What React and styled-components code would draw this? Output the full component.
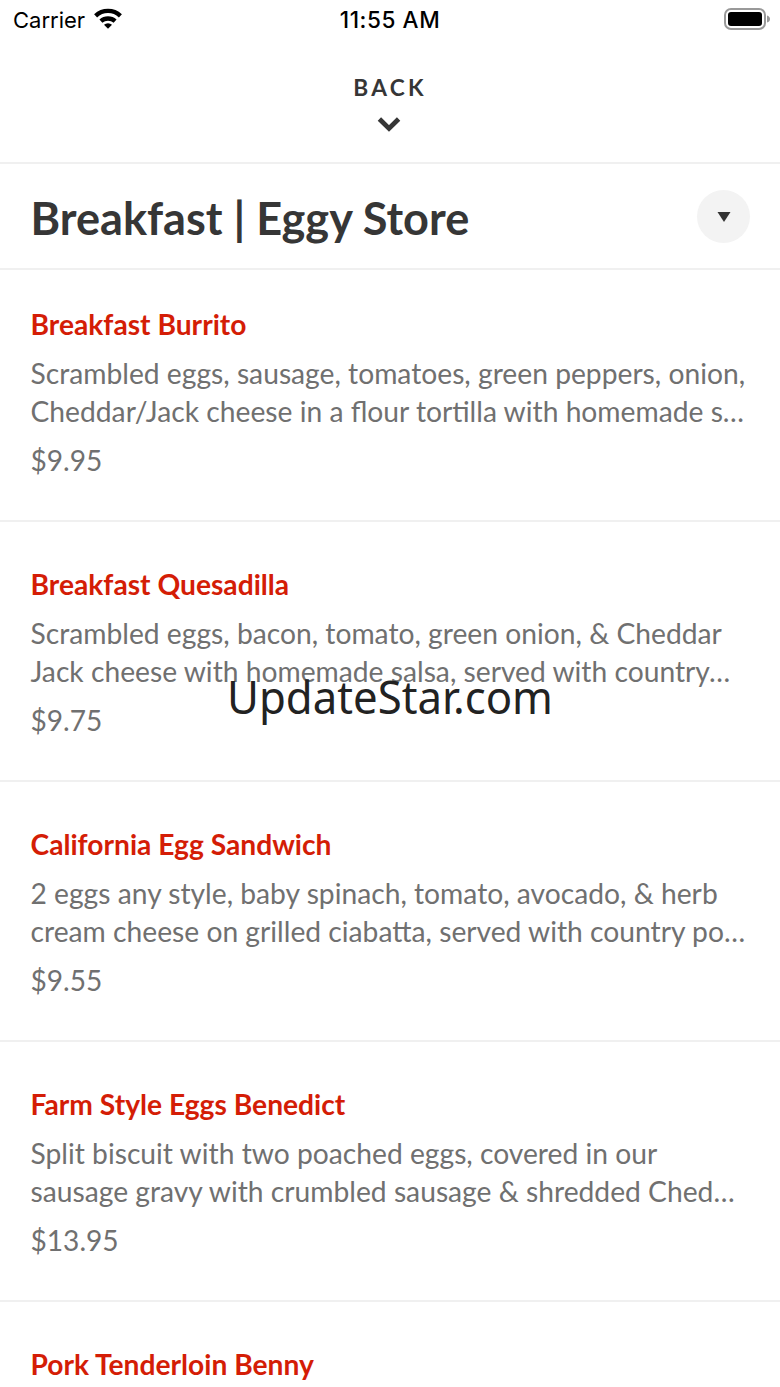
import React from 'react'
import styled, { createGlobalStyle } from 'styled-components'

const GlobalStyle = createGlobalStyle`
*{
    box-sizing:border-box;
}
body{
    margin:0;
    background-color:#fff;
    font-family:Lato, sans-serif;
}
`

const Screen = styled.div`
position:relative;
width:780px;
height:1387px;
overflow:hidden;
background-color:#fff;
`

const StatusBar = styled.div`
display:grid;
grid-template-columns:1fr auto 1fr;
align-items:center;
height:39px;
padding:0 10px 0 13px;
font-family:Inter, sans-serif;
font-size:22px;
color:#000;
`

const Carrier = styled.div`
display:flex;
align-items:center;
gap:9px;
>svg{
    margin-top:-2px;
}
`

const Clock = styled.div`
margin-right:3px;
font-weight:500;
font-size:22.5px;
letter-spacing:0.6px;
`

const Battery = styled.svg`
justify-self:end;
margin-bottom:2px;
`

const BackButton = styled.button`
display:flex;
flex-direction:column;
align-items:center;
width:100%;
height:125px;
padding:35px 2px 0 0;
border:none;
border-bottom:2px solid #f0f0f0;
background:none;
color:#363636;
font:700 22.7px/28px Lato, sans-serif;
letter-spacing:3.2px;
text-indent:2px;
`

const Chevron = styled.svg`
margin-top:14px;
`

const TitleBar = styled.div`
display:flex;
align-items:center;
justify-content:space-between;
height:106px;
padding:0 30px 0 30.5px;
border-bottom:2px solid #f0f0f0;
`

const Title = styled.h1`
margin:4px 0 0;
color:#363636;
font-weight:700;
font-size:45.1px;
line-height:54px;
`

const RoundButton = styled.button`
display:flex;
align-items:center;
justify-content:center;
width:53px;
height:53px;
padding:2px 0 0;
border:none;
border-radius:50%;
background-color:#f3f3f3;
`

const MenuItem = styled.div`
height:260px;
padding:43px 30px 0 30.5px;
border-bottom:2px solid #f0f0f0;
&:first-child{
    height:252px;
    padding-top:35px;
}
`

const ItemName = styled.h2`
margin:0;
color:#d41d06;
font-weight:700;
font-size:28.2px;
line-height:38px;
`

const ItemText = styled.p`
margin:11px 0 0;
color:#707070;
font-size:28.22px;
line-height:38px;
white-space:nowrap;
`

const ItemPrice = styled.div`
margin-top:11px;
color:#707070;
font-size:28.1px;
line-height:38px;
`

const Watermark = styled.div`
position:absolute;
top:664px;
left:0;
width:780px;
text-align:center;
font:400 46px/64px "Noto Sans", sans-serif;
color:#222;
transform:scaleX(0.95);
`

const items = [
    {
        name: 'Breakfast Burrito',
        lines: ['Scrambled eggs, sausage, tomatoes, green peppers, onion,', 'Cheddar/Jack cheese in a flour tortilla with homemade s…'],
        price: '$9.95',
    },
    {
        name: 'Breakfast Quesadilla',
        lines: ['Scrambled eggs, bacon, tomato, green onion, & Cheddar', 'Jack cheese with homemade salsa, served with country…'],
        price: '$9.75',
    },
    {
        name: 'California Egg Sandwich',
        lines: ['2 eggs any style, baby spinach, tomato, avocado, & herb', 'cream cheese on grilled ciabatta, served with country po…'],
        price: '$9.55',
    },
    {
        name: 'Farm Style Eggs Benedict',
        lines: ['Split biscuit with two poached eggs, covered in our', 'sausage gravy with crumbled sausage & shredded Ched…'],
        price: '$13.95',
    },
    { name: 'Pork Tenderloin Benny', lines: [] },
]

const App = () => {
    return (
        <Screen>
            <GlobalStyle/>
            <StatusBar>
                <Carrier>
                    Carrier
                    <svg width="29" height="21" viewBox="0 0 29 21">
                        <path d="M14 20.8l-4-4a6 6 0 0 1 8 0z"/>
                        <path d="M6.9 13.2a10.6 10.6 0 0 1 14.2 0M1.6 7.8a18.2 18.2 0 0 1 24.8 0" fill="none" stroke="#000" strokeWidth="4.4"/>
                    </svg>
                </Carrier>
                <Clock>11:55 AM</Clock>
                <Battery width="46" height="22" viewBox="0 0 46 22">
                    <rect x="1" y="1" width="40" height="20" rx="6" fill="none" stroke="#999" strokeWidth="2"/>
                    <rect x="4" y="4" width="34" height="14" rx="3"/>
                    <path d="M43 7.5q3 1 3 3.5t-3 3.5z" fill="#999"/>
                </Battery>
            </StatusBar>
            <BackButton>
                BACK
                <Chevron width="24" height="16" viewBox="0 0 24 16">
                    <path d="M2.4 3l9.6 9.4L21.6 3" fill="none" stroke="#363636" strokeWidth="4.8"/>
                </Chevron>
            </BackButton>
            <TitleBar>
                <Title>Breakfast | Eggy Store</Title>
                <RoundButton>
                    <svg width="14" height="10" viewBox="0 0 14 10">
                        <path d="M0.5 0h13L7 10z" fill="#333"/>
                    </svg>
                </RoundButton>
            </TitleBar>
            <div>
                {items.map((item) => (
                    <MenuItem key={item.name}>
                        <ItemName>{item.name}</ItemName>
                        <ItemText>
                            {item.lines.map((line) => (
                                <React.Fragment key={line}>{line}<br/></React.Fragment>
                            ))}
                        </ItemText>
                        <ItemPrice>{item.price}</ItemPrice>
                    </MenuItem>
                ))}
            </div>
            <Watermark>UpdateStar.com</Watermark>
        </Screen>
    )
}

export default App
